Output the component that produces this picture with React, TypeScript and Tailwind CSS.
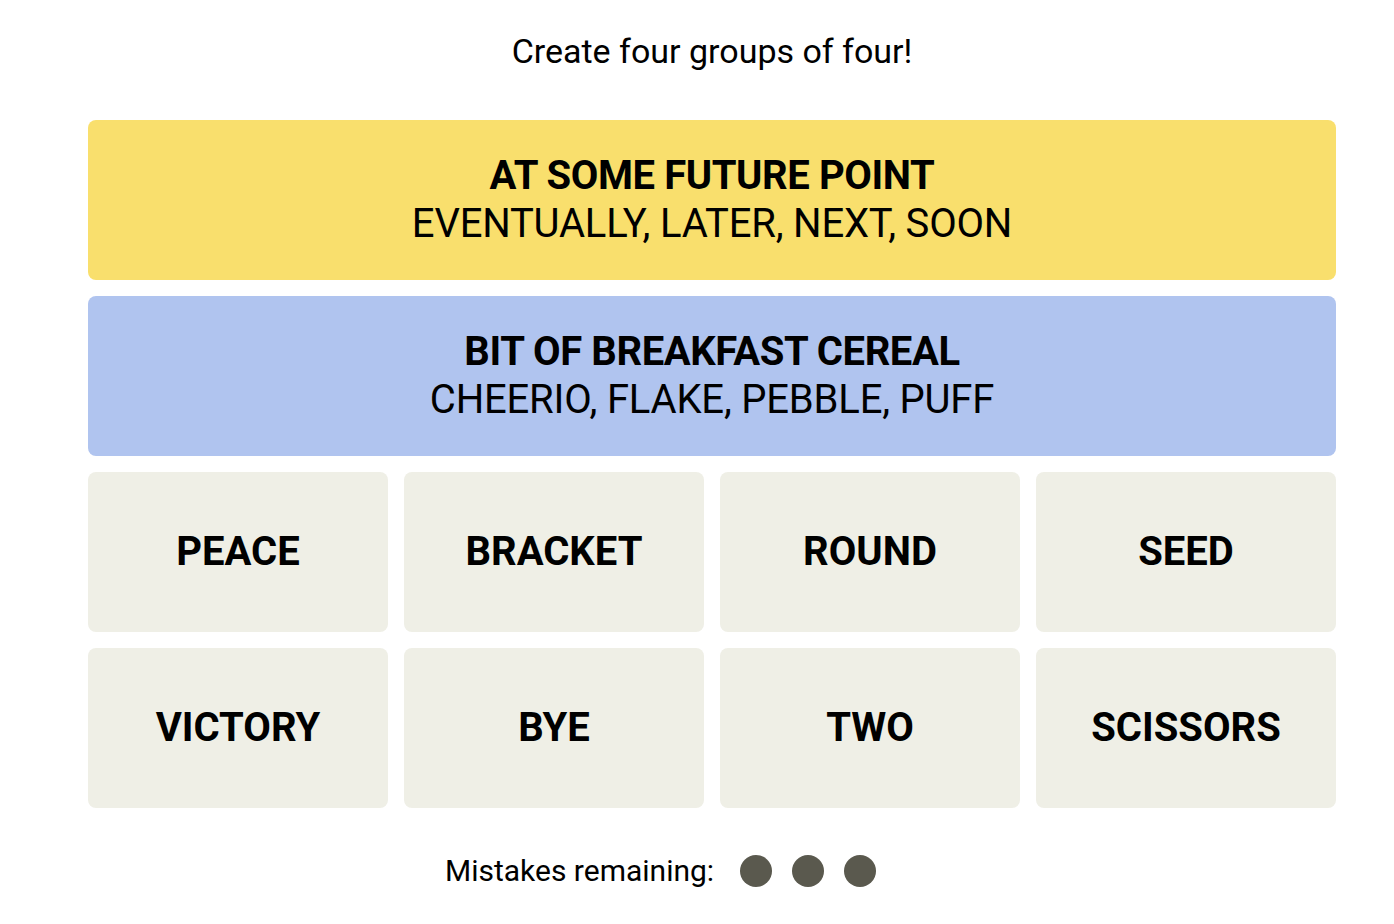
import React from "react";

interface Group {
  title: string;
  members: string[];
  color: string;
}

const solved: Group[] = [
  { title: "AT SOME FUTURE POINT", members: ["EVENTUALLY", "LATER", "NEXT", "SOON"], color: "bg-[#f9df6d]" },
  { title: "BIT OF BREAKFAST CEREAL", members: ["CHEERIO", "FLAKE", "PEBBLE", "PUFF"], color: "bg-[#b0c4ef]" },
];

const words = ["PEACE", "BRACKET", "ROUND", "SEED", "VICTORY", "BYE", "TWO", "SCISSORS"];

const App: React.FC = () => {
  return (
    <div className="min-h-[924px] bg-white text-black font-['Roboto',sans-serif] pl-[88px] pr-[58px]">
      <p className="pt-[31px] h-[120px] text-center text-[34px] leading-[40px]">Create four groups of four!</p>

      <div className="grid grid-cols-4 gap-4">
        {solved.map((g) => (
          <div
            key={g.title}
            className={`${g.color} col-span-4 h-[160px] rounded-lg flex flex-col items-center justify-center`}
          >
            <h3 className="text-[40px] leading-[48px] font-bold tracking-[-0.4px]">{g.title}</h3>
            <p className="text-[40px] leading-[48px] tracking-[-0.2px]">{g.members.join(", ")}</p>
          </div>
        ))}
        {words.map((w) => (
          <button
            key={w}
            className="h-[160px] rounded-lg bg-[#efefe6] flex items-center justify-center text-[40px] font-bold"
          >
            {w}
          </button>
        ))}
      </div>

      <div className="flex items-center pl-[357px] pt-[47px] gap-[22px]">
        <span className="w-[273px] text-[30px] leading-[32px] whitespace-nowrap">Mistakes remaining:</span>
        <div className="flex gap-5">
          {[0, 1, 2].map((i) => (
            <span key={i} className="w-8 h-8 rounded-full bg-[#5a594e]" />
          ))}
        </div>
      </div>
    </div>
  );
};

export default App;
